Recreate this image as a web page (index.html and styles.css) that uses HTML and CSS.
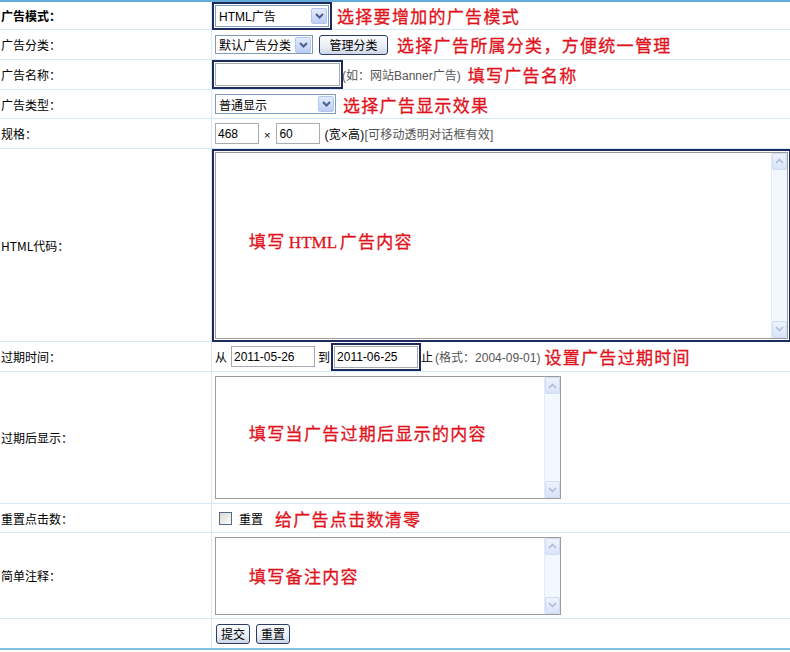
FILE: index.html
```html
<!DOCTYPE html>
<html lang="zh-CN">
<head>
    <meta charset="UTF-8">
    <title>添加广告</title>
    <link rel="stylesheet" href="styles.css">
</head>
<body>
    <div class="form">
        <div class="row h28">
            <div class="label"><b>广告模式：</b></div>
            <div class="field">
                <span class="select hl sel-mode">HTML广告<span class="arrow"><svg width="9" height="6"><path d="M1 1l3.5 3.5L8 1" stroke="#4a5f8c" stroke-width="2" fill="none"/></svg></span></span>
                <span class="tip t8">选择要增加的广告模式</span>
            </div>
        </div>

        <div class="row h30">
            <div class="label">广告分类：</div>
            <div class="field">
                <span class="select sel-cat">默认广告分类<span class="arrow"><svg width="9" height="6"><path d="M1 1l3.5 3.5L8 1" stroke="#4a5f8c" stroke-width="2" fill="none"/></svg></span></span>
                <button class="btn btn-manage">管理分类</button>
                <span class="tip t9">选择广告所属分类，方便统一管理</span>
            </div>
        </div>

        <div class="row h30">
            <div class="label">广告名称：</div>
            <div class="field">
                <input type="text" class="input hl in-name">
                <span class="hint">(如：网站Banner广告)</span>
                <span class="tip t7">填写广告名称</span>
            </div>
        </div>

        <div class="row h29">
            <div class="label">广告类型：</div>
            <div class="field">
                <span class="select sel-type">普通显示<span class="arrow"><svg width="9" height="6"><path d="M1 1l3.5 3.5L8 1" stroke="#4a5f8c" stroke-width="2" fill="none"/></svg></span></span>
                <span class="tip t7">选择广告显示效果</span>
            </div>
        </div>

        <div class="row h30">
            <div class="label">规格：</div>
            <div class="field">
                <input type="text" class="input in-size" value="468">
                <span class="times">×</span>
                <input type="text" class="input in-size" value="60">
                <span class="note">(宽×高)<span class="gray">[可移动透明对话框有效]</span></span>
            </div>
        </div>

        <div class="row h193">
            <div class="label">HTML代码：</div>
            <div class="field">
                <div class="area hl area-html">
                    <div class="area-text lift"><span class="tip">填写<span class="latin"> HTML </span>广告内容</span></div>
                    <div class="scroll">
                        <span class="sb-btn"><svg width="9" height="6"><path d="M1 5l3.5-3.5L8 5" stroke="#a7b9dc" stroke-width="1.5" fill="none"/></svg></span>
                        <span class="sb-btn"><svg width="9" height="6"><path d="M1 1l3.5 3.5L8 1" stroke="#a7b9dc" stroke-width="1.5" fill="none"/></svg></span>
                    </div>
                </div>
            </div>
        </div>

        <div class="row h30">
            <div class="label">过期时间：</div>
            <div class="field">
                <span class="word">从</span>
                <input type="text" class="input in-date" value="2011-05-26">
                <span class="word">到</span>
                <input type="text" class="input hl in-date in-end" value="2011-06-25">
                <span class="word">止</span>
                <span class="hint">(格式：2004-09-01)</span>
                <span class="tip t4">设置广告过期时间</span>
            </div>
        </div>

        <div class="row h132">
            <div class="label">过期后显示：</div>
            <div class="field">
                <div class="area area-small area-expire">
                    <div class="area-text lift"><span class="tip">填写当广告过期后显示的内容</span></div>
                    <div class="scroll">
                        <span class="sb-btn"><svg width="9" height="6"><path d="M1 5l3.5-3.5L8 5" stroke="#a7b9dc" stroke-width="1.5" fill="none"/></svg></span>
                        <span class="sb-btn"><svg width="9" height="6"><path d="M1 1l3.5 3.5L8 1" stroke="#a7b9dc" stroke-width="1.5" fill="none"/></svg></span>
                    </div>
                </div>
            </div>
        </div>

        <div class="row h29">
            <div class="label">重置点击数：</div>
            <div class="field">
                <span class="check"></span>
                <span class="word">重置</span>
                <span class="tip t12">给广告点击数清零</span>
            </div>
        </div>

        <div class="row h86">
            <div class="label">简单注释：</div>
            <div class="field">
                <div class="area area-small area-note">
                    <div class="area-text"><span class="tip">填写备注内容</span></div>
                    <div class="scroll">
                        <span class="sb-btn"><svg width="9" height="6"><path d="M1 5l3.5-3.5L8 5" stroke="#a7b9dc" stroke-width="1.5" fill="none"/></svg></span>
                        <span class="sb-btn"><svg width="9" height="6"><path d="M1 1l3.5 3.5L8 1" stroke="#a7b9dc" stroke-width="1.5" fill="none"/></svg></span>
                    </div>
                </div>
            </div>
        </div>

        <div class="row h29 last">
            <div class="label"></div>
            <div class="field">
                <button class="btn btn-small">提交</button>
                <button class="btn btn-small btn-reset">重置</button>
            </div>
        </div>
    </div>
</body>
</html>
```

FILE: styles.css
```css
* {
    margin: 0;
    padding: 0;
    box-sizing: border-box;
}

body {
    background: #fff;
    font-family: "Liberation Sans", "Noto Sans CJK SC", sans-serif;
    font-size: 12px;
    color: #000;
}

.form {
    width: 790px;
    border-top: 2px solid #64acd7;
    border-bottom: 2px solid #80c4e2;
}

.row {
    display: flex;
    border-bottom: 1px solid #d5eaf4;
}

.row.last {
    border-bottom: none;
}

.h28 { height: 28px; }
.h29 { height: 29px; }
.h30 { height: 30px; }
.h86 { height: 86px; }
.h132 { height: 132px; }
.h193 { height: 193px; }

.label {
    width: 212px;
    flex-shrink: 0;
    border-right: 1px solid #d5eaf4;
    display: flex;
    align-items: center;
    padding-left: 1px;
    font-family: "Noto Sans CJK SC", sans-serif;
}

.label b {
    font-weight: bold;
}

.field {
    flex: 1;
    display: flex;
    align-items: center;
    padding-left: 3px;
    white-space: nowrap;
}

/* navy frame drawn round the highlighted controls */
.hl {
    outline: 2px solid #1d2a5e;
    outline-offset: 1px;
}

.select {
    display: inline-flex;
    align-items: center;
    justify-content: space-between;
    height: 20px;
    padding-left: 3px;
    border: 1px solid #7f9db9;
    background: #fff;
}

.select .arrow {
    width: 16px;
    height: 16px;
    margin-right: 1px;
    display: flex;
    align-items: center;
    justify-content: center;
    background: linear-gradient(#e3ebfc, #bccff6);
    border: 1px solid #b4c6ec;
    border-radius: 2px;
}

.sel-mode {
    width: 114px;
    height: 22px;
}

.sel-cat {
    width: 98px;
    height: 19px;
}

.sel-type {
    width: 121px;
    height: 20px;
}

.btn {
    font-family: "Noto Sans CJK SC", sans-serif;
    font-size: 12px;
    color: #000;
    height: 20px;
    border: 1px solid #2c3c66;
    border-radius: 3px;
    background: linear-gradient(#fbfcfe, #e8edf5 60%, #cdd6e6);
    display: inline-flex;
    align-items: center;
    justify-content: center;
}

.btn-manage {
    width: 69px;
    margin-left: 6px;
}

.btn-small {
    width: 34px;
    margin-left: 1px;
}

.btn-reset {
    margin-left: 6px;
}

.input {
    font-family: "Liberation Sans", "Noto Sans CJK SC", sans-serif;
    font-size: 12px;
    height: 21px;
    padding: 0 2px;
    border: 1px solid #a5acb2;
    background: #fff;
    color: #000;
}

.in-name {
    width: 125px;
    height: 23px;
}

.in-size {
    width: 44px;
}

.in-date {
    width: 84px;
    margin-left: 4px;
}

.in-end {
    margin-left: 5px;
    height: 22px;
}

.times {
    margin: 3px 6px 0 5px;
    font-size: 11px;
}

.word {
    font-family: "Noto Sans CJK SC", sans-serif;
}

.word + .input {
    margin-left: 4px;
}

.input + .word {
    margin-left: 3px;
}

.hint {
    color: #555;
    margin-left: 2px;
}

.note {
    margin-left: 4px;
    letter-spacing: 0.2px;
}

.gray {
    color: #555;
}

.tip {
    font-family: "Liberation Serif", "Noto Sans CJK SC", serif;
    font-size: 17px;
    letter-spacing: 1.3px;
    color: #e0121b;
    -webkit-text-stroke: 0.3px #e0121b;
}

.tip .latin {
    letter-spacing: 0;
    word-spacing: -1px;
}

.t4 { margin-left: 4px; }
.t7 { margin-left: 7px; }
.t8 { margin-left: 8px; }
.t9 { margin-left: 9px; }
.t12 { margin-left: 12px; }

.area {
    display: flex;
    border: 1px solid #9c9c9c;
    background: #fff;
}

.area-html {
    width: 573px;
    height: 187px;
}

.area-small {
    width: 346px;
}

.area-expire {
    height: 123px;
}

.area-note {
    height: 78px;
}

.area-text {
    flex: 1;
    display: flex;
    align-items: center;
    padding-left: 33px;
}

.area-text.lift {
    padding-bottom: 10px;
}

.scroll {
    width: 16px;
    display: flex;
    flex-direction: column;
    justify-content: space-between;
    background: #f3f7fe;
    border-left: 1px solid #e4ebf7;
}

.sb-btn {
    height: 17px;
    display: flex;
    align-items: center;
    justify-content: center;
    background: linear-gradient(#eef3fd, #d9e4f8);
    border: 1px solid #cfdcf3;
    border-radius: 2px;
}

.check {
    width: 13px;
    height: 13px;
    margin-left: 4px;
    margin-right: 7px;
    border: 1px solid #4f6b8a;
    background: linear-gradient(135deg, #dcdcd4, #fafaf8);
}
```
